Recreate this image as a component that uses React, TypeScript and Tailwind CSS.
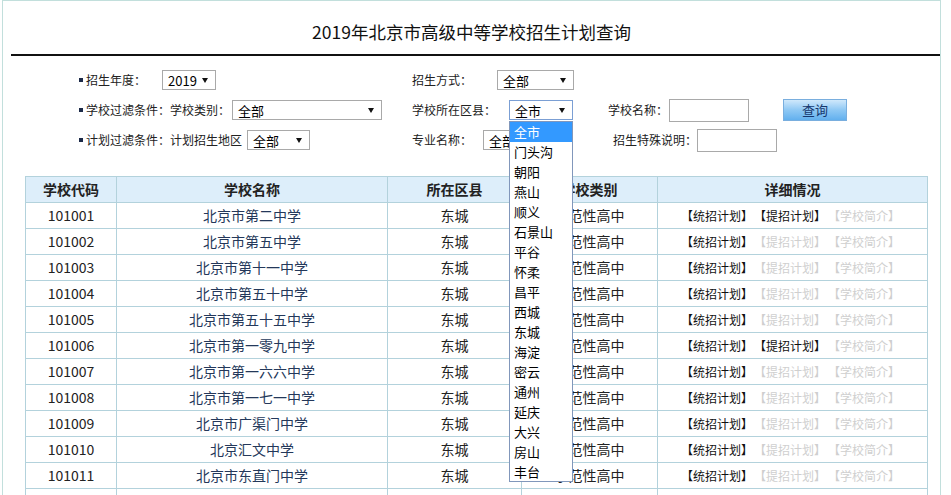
import React from "react";

type Row = { code: string; name: string; tizhao: boolean };

const rows: Row[] = [
  { code: "101001", name: "北京市第二中学", tizhao: true },
  { code: "101002", name: "北京市第五中学", tizhao: false },
  { code: "101003", name: "北京市第十一中学", tizhao: false },
  { code: "101004", name: "北京市第五十中学", tizhao: false },
  { code: "101005", name: "北京市第五十五中学", tizhao: false },
  { code: "101006", name: "北京市第一零九中学", tizhao: true },
  { code: "101007", name: "北京市第一六六中学", tizhao: false },
  { code: "101008", name: "北京市第一七一中学", tizhao: false },
  { code: "101009", name: "北京市广渠门中学", tizhao: false },
  { code: "101010", name: "北京汇文中学", tizhao: false },
  { code: "101011", name: "北京市东直门中学", tizhao: false },
];

const districts = [
  "全市",
  "门头沟",
  "朝阳",
  "燕山",
  "顺义",
  "石景山",
  "平谷",
  "怀柔",
  "昌平",
  "西城",
  "东城",
  "海淀",
  "密云",
  "通州",
  "延庆",
  "大兴",
  "房山",
  "丰台",
];

function Arrow() {
  return (
    <svg className="absolute right-[7px] top-[7px]" width="6" height="5" viewBox="0 0 6 5">
      <polygon points="0,0 6,0 3,5" fill="#111" />
    </svg>
  );
}

function Sel({ className, text }: { className: string; text: string }) {
  return (
    <div className={className}>
      <span className="pl-[5px] pt-[2px] text-[13px] leading-[18px] text-black">{text}</span>
      <Arrow />
    </div>
  );
}

function Bullet() {
  return <span className="inline-block w-[4px] h-[4px] bg-[#1c2a48] mr-[3px] shrink-0" />;
}

function Link({ on, className, children }: { on: boolean; className: string; children: React.ReactNode }) {
  return (
    <span className={className + (on ? " text-[#111]" : " text-[#cfcfcf]")}>{children}</span>
  );
}

export default function App() {
  return (
    <div className="relative w-[951px] h-[495px] overflow-hidden bg-white text-[#222] font-['Microsoft_YaHei','Noto_Sans_CJK_SC',sans-serif]">
      <div className="ml-[2px] w-[939px] h-[495px] border-x border-t border-[#c2dfdc]">
        <div className="pt-[19px] text-center text-[17.5px] leading-[24px] text-[#111]">
          2019年北京市高级中等学校招生计划查询
        </div>
        <div className="ml-[8px] mt-[10px] h-[2px] bg-[#111]" />

        <div className="mt-[9px] pl-[76px] text-[12px] text-[#222]">
          {/* row 1 */}
          <div className="flex items-center h-[30px]">
            <div className="w-[333px] flex items-center">
              <Bullet />
              <span className="w-[76px]">招生年度：</span>
              <Sel
                className="relative flex items-center w-[54px] h-[20px] border border-[#a9a9a9] bg-white"
                text="2019"
              />
            </div>
            <div className="flex items-center">
              <span className="w-[85px]">招生方式：</span>
              <Sel
                className="relative flex items-center w-[77px] h-[20px] border border-[#a9a9a9] bg-white"
                text="全部"
              />
            </div>
          </div>

          {/* row 2 */}
          <div className="flex items-center h-[30px]">
            <div className="w-[333px] flex items-center">
              <Bullet />
              <span className="w-[146px]">学校过滤条件：学校类别：</span>
              <Sel
                className="relative flex items-center w-[150px] h-[20px] border border-[#a9a9a9] bg-white"
                text="全部"
              />
            </div>
            <div className="w-[196px] flex items-center">
              <span className="w-[97px]">学校所在区县：</span>
              <Sel
                className="relative flex items-center w-[64px] h-[20px] border border-[#7b9fd4] bg-white"
                text="全市"
              />
            </div>
            <div className="flex items-center">
              <span className="w-[61px]">学校名称：</span>
              <div className="w-[80px] h-[23px] border border-[#a9a9a9] bg-white" />
              <div className="ml-[34px] w-[64px] h-[22px] border border-[#79aede] bg-gradient-to-b from-[#cfe8fb] via-[#8ec8f4] to-[#62b0ee] flex items-center justify-center text-[13px] text-[#17386e]">
                查询
              </div>
            </div>
          </div>

          {/* row 3 */}
          <div className="flex items-center h-[30px]">
            <div className="w-[333px] flex items-center">
              <Bullet />
              <span className="w-[161px]">计划过滤条件：计划招生地区</span>
              <Sel
                className="relative flex items-center w-[63px] h-[20px] border border-[#a9a9a9] bg-white"
                text="全部"
              />
            </div>
            <div className="w-[201px] flex items-center">
              <span className="w-[71px]">专业名称：</span>
              <Sel
                className="relative flex items-center w-[80px] h-[20px] border border-[#a9a9a9] bg-white"
                text="全部"
              />
            </div>
            <div className="flex items-center">
              <span className="w-[84px]">招生特殊说明：</span>
              <div className="w-[80px] h-[23px] border border-[#a9a9a9] bg-white" />
            </div>
          </div>
        </div>

        <table className="mt-[21px] ml-[22px] w-[902px] table-fixed border-collapse text-[14px]">
          <colgroup>
            <col className="w-[91px]" />
            <col className="w-[271px]" />
            <col className="w-[134px]" />
            <col className="w-[136px]" />
            <col className="w-[270px]" />
          </colgroup>
          <thead>
            <tr className="h-[26px] bg-[#ddeefa] text-[#222] font-bold">
              <th className="border border-[#b3d2dc] p-0 font-bold">学校代码</th>
              <th className="border border-[#b3d2dc] p-0 font-bold">学校名称</th>
              <th className="border border-[#b3d2dc] p-0 font-bold">所在区县</th>
              <th className="border border-[#b3d2dc] p-0 font-bold">学校类别</th>
              <th className="border border-[#b3d2dc] p-0 font-bold">详细情况</th>
            </tr>
          </thead>
          <tbody>
            {rows.map((r) => (
              <tr key={r.code} className="h-[26px]">
                <td className="border border-[#b3d2dc] p-0 text-center text-[#222]">{r.code}</td>
                <td className="border border-[#b3d2dc] p-0 text-center text-[#24385a]">{r.name}</td>
                <td className="border border-[#b3d2dc] p-0 text-center text-[#222]">东城</td>
                <td className="border border-[#b3d2dc] p-0 text-center text-[#222]">示范性高中</td>
                <td className="border border-[#b3d2dc] p-0 pr-[4px] text-center text-[12px] whitespace-nowrap">
                  <Link on={true} className="">【统招计划】</Link>
                  <Link on={r.tizhao} className="ml-[7px]">【提招计划】</Link>
                  <Link on={false} className="ml-[8px]">【学校简介】</Link>
                </td>
              </tr>
            ))}
            <tr className="h-[26px]">
              <td className="border border-[#b3d2dc] p-0" />
              <td className="border border-[#b3d2dc] p-0" />
              <td className="border border-[#b3d2dc] p-0" />
              <td className="border border-[#b3d2dc] p-0" />
              <td className="border border-[#b3d2dc] p-0" />
            </tr>
          </tbody>
        </table>
      </div>

      {/* open dropdown list */}
      <div className="absolute left-[509px] top-[121px] w-[64px] h-[361px] border border-[#8197bb] bg-white">
        {districts.map((d, i) => (
          <div
            key={d}
            className={
              i === 0
                ? "h-[20px] pl-[4px] text-[13px] leading-[20px] bg-[#3399ff] text-white"
                : "h-[20px] pl-[4px] text-[13px] leading-[20px] text-black"
            }
          >
            {d}
          </div>
        ))}
      </div>
    </div>
  );
}
